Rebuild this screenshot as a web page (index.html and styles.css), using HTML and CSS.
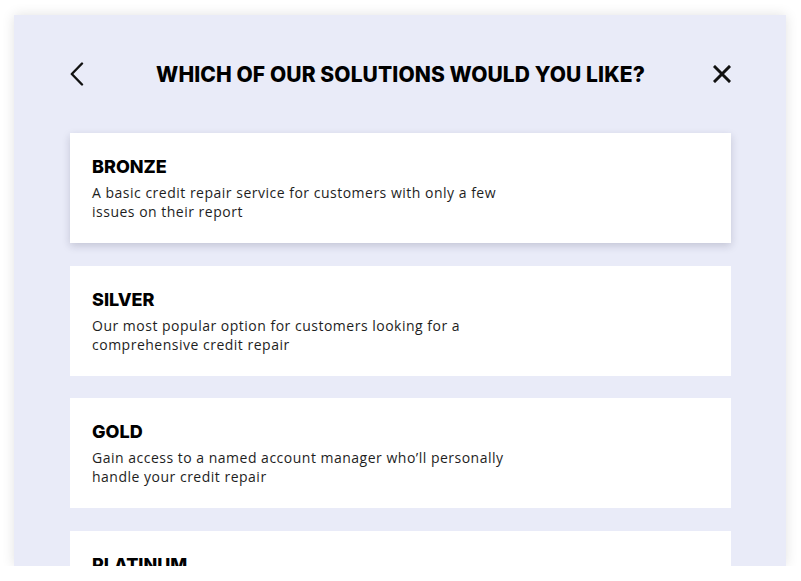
FILE: index.html
```html
<!DOCTYPE html>
<html lang="en">
<head>
    <meta charset="UTF-8">
    <meta name="viewport" content="width=device-width, initial-scale=1.0">
    <title>Choose a solution</title>
    <link rel="stylesheet" href="styles.css">
</head>
<body>
    <div class="panel">
        <!-- header: back / title / close -->
        <div class="panel-header">
            <button class="icon-btn" aria-label="Back">
                <svg width="14" height="24" viewBox="0 0 14 24">
                    <polyline points="12,1.5 1.8,12 12,22.5" fill="none" stroke="#111" stroke-width="2.4" stroke-linecap="round" stroke-linejoin="round"/>
                </svg>
            </button>
            <h1 class="title">Which of our solutions would you like?</h1>
            <button class="icon-btn close" aria-label="Close">
                <svg width="18" height="18" viewBox="0 0 18 18">
                    <path d="M2 2 L16 16 M16 2 L2 16" fill="none" stroke="#111" stroke-width="3" stroke-linecap="square"/>
                </svg>
            </button>
        </div>

        <!-- options -->
        <div class="options">
            <div class="option active">
                <h3>Bronze</h3>
                <p>A basic credit repair service for customers with only a few issues on their report</p>
            </div>
            <div class="option">
                <h3>Silver</h3>
                <p>Our most popular option for customers looking for a comprehensive credit repair</p>
            </div>
            <div class="option">
                <h3>Gold</h3>
                <p>Gain access to a named account manager who’ll personally handle your credit repair</p>
            </div>
            <div class="option">
                <h3>Platinum</h3>
                <p>Everything in Gold, plus priority handling and monthly reporting</p>
            </div>
        </div>
    </div>
</body>
</html>
```

FILE: styles.css
```css
body {
    margin: 0;
    background: #fff;
    font-family: "Open Sans", "Liberation Sans", sans-serif;
}

/* the lavender dialog */
.panel {
    margin: 15px 15px 0 14px;
    height: 551px;
    background: #e9ebf8;
    box-shadow: 0 0 12px rgba(0, 0, 0, 0.12);
    padding: 38px 55px 0 56px;
    box-sizing: border-box;
    overflow: hidden;
}

.panel-header {
    display: flex;
    align-items: center;
    justify-content: space-between;
    height: 42px;
}

.icon-btn {
    width: 18px;
    background: none;
    border: none;
    padding: 0;
    cursor: pointer;
    display: flex;
}

.icon-btn.close {
    justify-content: flex-end;
}

.title {
    margin: 0;
    font-family: "Inter", sans-serif;
    font-weight: 800;
    font-size: 21px;
    letter-spacing: 0.1px;
    text-transform: uppercase;
    color: #000;
}

.options {
    margin-top: 38px;
    display: flex;
    flex-direction: column;
    gap: 22.5px;
}

.option {
    background: #fff;
    height: 110px;
    flex-shrink: 0;
    box-sizing: border-box;
    padding: 22px 22px;
    cursor: pointer;
}

.option.active {
    box-shadow: 0 3px 8px rgba(30, 30, 60, 0.18);
}

.option h3 {
    margin: 0;
    font-family: "Inter", sans-serif;
    font-weight: 800;
    font-size: 18px;
    line-height: 24px;
    text-transform: uppercase;
    color: #000;
}

.option p {
    margin: 4px 0 0;
    max-width: 430px;
    font-size: 14px;
    line-height: 19px;
    letter-spacing: 0.5px;
    color: #1e1e1e;
}
```
